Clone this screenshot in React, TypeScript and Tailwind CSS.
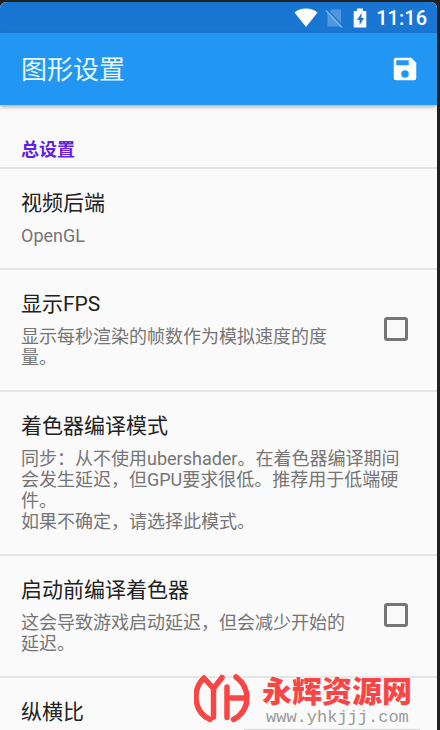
import * as React from 'react'
import { cva, type VariantProps } from 'class-variance-authority'

const fontStack = "font-[Roboto,'Noto_Sans_CJK_SC',sans-serif]"

const rowVariants = cva('flex items-center border-b-2 border-[#e4e4e4] pt-5 pb-[22px] pl-[21px]', {
    variants: {
        kind: {
            link: 'pr-7',
            toggle: 'pr-[29px]'
        }
    },
    defaultVariants: {
        kind: 'link'
    }
})

type RowTextProps = {
    title: string
    summary?: string
}

function RowText({ title, summary }: RowTextProps) {
    return (
        <span className="block min-w-0 flex-1">
            <span className="block text-[21px] leading-7 text-[#212121]">{title}</span>
            {summary ? (
                <span className="mt-2 block text-[18px] leading-[21px] whitespace-pre-line text-[#757575]">
                    {summary}
                </span>
            ) : null}
        </span>
    )
}

type SettingRowProps = RowTextProps & VariantProps<typeof rowVariants>

function SettingRow({ title, summary, kind }: SettingRowProps) {
    const [checked, setChecked] = React.useState(false)

    if (kind === 'toggle') {
        return (
            <label className={rowVariants({ kind })}>
                <RowText title={title} summary={summary} />
                <input
                    type="checkbox"
                    checked={checked}
                    onChange={(event) => setChecked(event.target.checked)}
                    className="ml-8 size-6 shrink-0 appearance-none rounded-[3px] border-[3px] border-[#757575] checked:bg-[#757575]"
                />
            </label>
        )
    }

    return (
        <button type="button" className={`${rowVariants({ kind })} text-left`}>
            <RowText title={title} summary={summary} />
        </button>
    )
}

function StatusBar() {
    return (
        <div className="flex h-[31px] items-center justify-end bg-[#1976d2] pr-[10px] text-white">
            <svg viewBox="0 0 24 19" className="h-[19px] w-6" fill="currentColor" aria-hidden="true">
                <path d="M12 19 .5 4.600C3.700 2 7.600.600 12 .600s8.300 1.400 11.500 4z" />
            </svg>
            <svg viewBox="0 0 18 20" className="ml-[7px] h-5 w-[18px]" aria-hidden="true">
                <path d="M6.500 1.500H16v17H2.500V5.500z" fill="#5097df" />
                <path d="m2 1.500 16 17" stroke="#1976d2" strokeWidth="1.600" />
                <path d="m1 2.500 16 17" stroke="#7db3e9" strokeWidth="1.600" />
            </svg>
            <svg viewBox="0 0 14 20" className="ml-2.5 h-5 w-[14px]" aria-hidden="true">
                <path d="M4 .5h6V3h2.500q.8 0 .8.800v14.900q0 .800-.8.800h-11q-.8 0-.8-.800V3.800q0-.800.800-.800H4z" fill="currentColor" />
                <path d="M8.500 5 4 12h2.600v5L11 10H8.500z" fill="#1976d2" />
            </svg>
            <span className="ml-[9px] text-[20px] leading-6 font-medium">11:16</span>
        </div>
    )
}

function AppBar() {
    return (
        <header className="relative flex h-[72px] items-center justify-between bg-[#2196f3] pr-[17px] pl-[21px] text-white shadow-[0_2px_4px_rgba(0,0,0,0.3)]">
            <h1 className="pt-0.5 text-[26px] leading-9 text-[#e6f7ff]">图形设置</h1>
            <button type="button" aria-label="保存" className="size-[30px]">
                <svg viewBox="0 0 24 24" className="size-full" fill="currentColor" aria-hidden="true">
                    <path d="M17 3H5a2 2 0 0 0-2 2v14a2 2 0 0 0 2 2h14a2 2 0 0 0 2-2V7l-4-4zm-5 16a3 3 0 1 1 0-6 3 3 0 0 1 0 6zm3-10H5V5h10v4z" />
                </svg>
            </button>
        </header>
    )
}

function Watermark() {
    return (
        <div className="pointer-events-none absolute right-7 bottom-1 flex items-start">
            <svg viewBox="0 0 56 49" className="h-[49px] w-14 drop-shadow-[0_0_2px_white]" fill="none" stroke="#f84646" strokeWidth="5.500" strokeLinecap="round" strokeLinejoin="round" aria-hidden="true">
                <path d="M16 45.500C-1.500 37-1.500 15 10 4L19.500 14.500 28 3.500M19.500 14.500V43" />
                <path d="M33 13V43.500M33 24H52M42 3C57 14 57 36 39.500 45.500" />
            </svg>
            <div className="pl-3">
                <div className="text-[30px] leading-9 font-black text-[#f84646] [text-shadow:0_0_3px_white,0_0_2px_white]">
                    永辉资源网
                </div>
                <div className="pl-1 font-['Liberation_Mono',monospace] text-[17px] leading-4 text-[#9a9a9a]">
                    www.yhkjjj.com
                </div>
            </div>
        </div>
    )
}

export default function App() {
    return (
        <div lang="zh-CN" className={`relative flex h-screen flex-col overflow-hidden bg-[#202020] pt-0.5 pr-[3px] ${fontStack}`}>
            <div className="flex min-h-0 flex-1 flex-col overflow-hidden rounded-t-[6px] bg-[#fafafa]">
                <StatusBar />
                <AppBar />
                <main className="flex min-h-0 flex-1 flex-col overflow-hidden *:shrink-0">
                    <h2 className="border-b-2 border-[#e4e4e4] pt-[33px] pb-[5px] pl-[21px] text-[18px] leading-6 font-bold text-[#651fe0]">
                        总设置
                    </h2>
                    <SettingRow title="视频后端" summary="OpenGL" />
                    <SettingRow kind="toggle" title="显示FPS" summary="显示每秒渲染的帧数作为模拟速度的度量。" />
                    <SettingRow
                        title="着色器编译模式"
                        summary={'同步：从不使用ubershader。在着色器编译期间会发生延迟，但GPU要求很低。推荐用于低端硬件。\n如果不确定，请选择此模式。'}
                    />
                    <SettingRow kind="toggle" title="启动前编译着色器" summary="这会导致游戏启动延迟，但会减少开始的延迟。" />
                    <SettingRow title="纵横比" />
                </main>
            </div>
            <Watermark />
            <div className="absolute right-5 bottom-0 h-px w-44 bg-[#d6d6d6]" />
        </div>
    )
}
